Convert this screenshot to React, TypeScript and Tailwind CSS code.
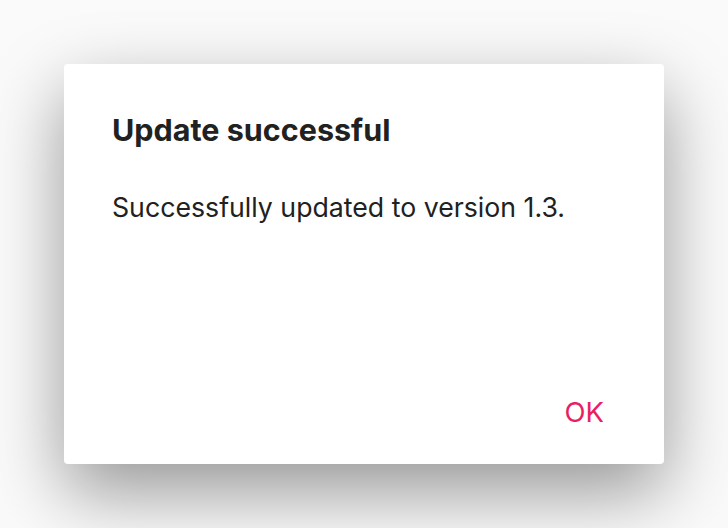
export default function App() {
  return (
    <div className="w-[728px] h-[528px] bg-[#fafafa] flex items-start justify-center pt-16 overflow-hidden font-['Inter','Noto_Sans',sans-serif]">
      <div className="w-[600px] h-[400px] bg-white rounded-[4px] shadow-[0_28px_72px_rgba(0,0,0,0.4)] flex flex-col px-12 pt-12">
        <h2 className="text-[30.5px] leading-[36px] font-bold text-[#212121]">
          Update successful
        </h2>
        <p className="mt-[43px] text-[26.7px] leading-[32px] text-[#212121]">
          Successfully updated to version 1.3.
        </p>
        <div className="mt-auto mb-9 flex justify-end">
          <button className="text-[27.5px] leading-[32px] text-[#e91e63] pl-[13px] pr-[12px]">OK</button>
        </div>
      </div>
    </div>
  );
}
